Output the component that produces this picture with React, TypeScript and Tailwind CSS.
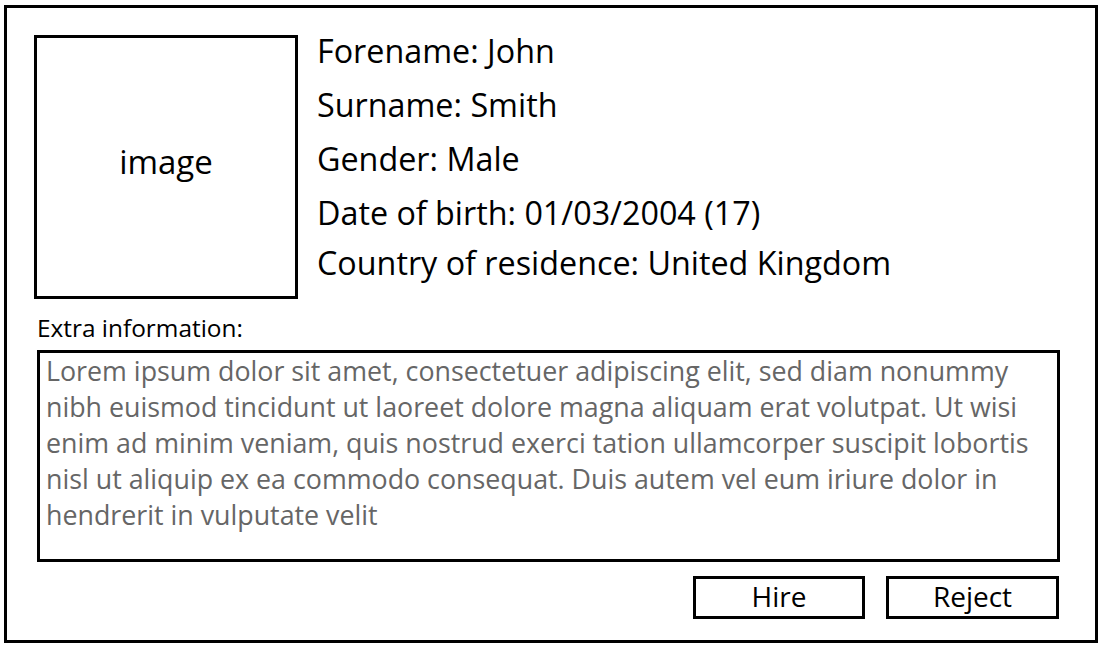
const details = [
  "Forename: John",
  "Surname: Smith",
  "Gender: Male",
  "Date of birth: 01/03/2004 (17)",
  "Country of residence: United Kingdom",
];

const extraLines = [
  "Lorem ipsum dolor sit amet, consectetuer adipiscing elit, sed diam nonummy",
  "nibh euismod tincidunt ut laoreet dolore magna aliquam erat volutpat. Ut wisi",
  "enim ad minim veniam, quis nostrud exerci tation ullamcorper suscipit lobortis",
  "nisl ut aliquip ex ea commodo consequat. Duis autem vel eum iriure dolor in",
  "hendrerit in vulputate velit",
];

export default function App() {
  return (
    <div
      className="h-[649px] w-[1105px] overflow-hidden bg-white pl-[4px] pt-[5px] text-black"
      style={{ fontFamily: '"Open Sans", "Liberation Sans", sans-serif' }}
    >
      <div className="h-[638px] w-[1094px] border-[3px] border-black pl-[27px] pt-[27px]">
        {/* top: picture + personal details */}
        <div className="flex">
          <div className="flex h-[264px] w-[264px] shrink-0 items-center justify-center border-[3px] border-black">
            <span className="mb-[10px] text-[33px]">image</span>
          </div>
          <div className="ml-[19px] -mt-[12px] flex flex-col">
            {details.map((d, i) => (
              <div
                key={d}
                className={
                  "whitespace-nowrap text-[32.3px] leading-[54px] " +
                  (i === 4 ? "-mt-[4px]" : "")
                }
              >
                {d}
              </div>
            ))}
          </div>
        </div>

        <div className="ml-[3px] mt-[14px] text-[24.4px] leading-[30px]">
          Extra information:
        </div>

        <div className="ml-[3px] mt-[7px] h-[212px] w-[1023px] border-[3px] border-black px-[6px] text-[#666666]">
          {extraLines.map((l) => (
            <div
              key={l}
              className="whitespace-nowrap text-[26.8px] leading-[36px]"
            >
              {l}
            </div>
          ))}
        </div>

        <div className="ml-[3px] mt-[14px] flex w-[1022px] justify-end gap-[21px]">
          <button className="flex h-[43px] w-[172px] items-center justify-center border-[3px] border-black pb-[3px] text-[28px]">
            Hire
          </button>
          <button className="flex h-[43px] w-[173px] items-center justify-center border-[3px] border-black pb-[3px] text-[28px]">
            Reject
          </button>
        </div>
      </div>
    </div>
  );
}
